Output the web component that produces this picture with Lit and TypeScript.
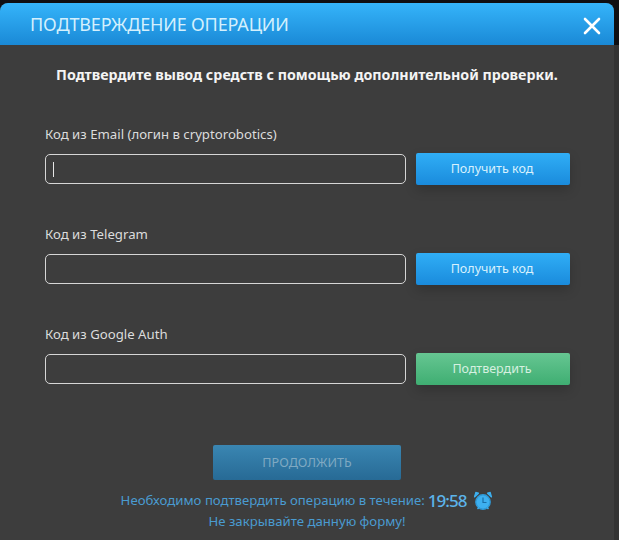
import { LitElement, html, css } from "lit";
import { customElement } from "lit/decorators.js";

@customElement("app-root")
export class AppRoot extends LitElement {
  static styles = css`
    :host { display: block; width: 619px; height: 540px; overflow: hidden; background: linear-gradient(#0f0f12 0, #0f0f12 45px, #333 45px); font-family: "Noto Sans", "Open Sans", sans-serif; }
    .top { height: 3px; }
    .modal { width: 614px; height: 537px; background: #3d3d3d; border-radius: 8px 8px 0 0; box-sizing: border-box; display: flex; flex-direction: column; }
    .head { height: 42px; flex: none; border-radius: 8px 8px 0 0; background: linear-gradient(#35b4fa, #1a89d6); display: flex; align-items: center; justify-content: space-between; padding: 0 13px 0 30px; color: #d4f0fd; font-size: 18px; letter-spacing: -0.15px; }
    .close { width: 18px; height: 18px; display: block; margin-top: 3px; }
    .lead { margin: 20px 0 0; text-align: center; color: #f4f4f4; font-weight: 700; font-size: 14.25px; line-height: 20px; }
    .rows { margin-top: 39px; padding-left: 45px; display: flex; flex-direction: column; gap: 39px; }
    .label { color: #dcdcdc; font-size: 13.2px; line-height: 20px; height: 20px; }
    .row { margin-top: 9px; display: flex; align-items: center; gap: 10px; }
    .input { width: 361px; height: 30px; box-sizing: border-box; border: 1px solid #d6d6d6; border-radius: 5px; display: flex; align-items: center; padding-left: 7px; }
    .caret { width: 1px; height: 15px; background: #e6e6e6; }
    .btn { width: 154px; height: 32px; box-sizing: border-box; padding: 0 2px 1px 0; border-radius: 2px; display: flex; align-items: center; justify-content: center; font-size: 12.5px; box-shadow: 0 5px 12px rgba(0,0,0,0.18); }
    .blue { background: linear-gradient(#30aef6, #1a8bdc); color: #d8f1fd; }
    .green { background: linear-gradient(#66c692, #3fae72); color: #d6f0e0; }
    .foot { margin-top: 60px; display: flex; flex-direction: column; align-items: center; }
    .go { width: 188px; height: 35px; border-radius: 2px; background: linear-gradient(#3a86b2, #276a95); color: #7fa9c2; font-size: 12.6px; display: flex; align-items: center; justify-content: center; }
    .note { color: #4a9bd0; font-size: 13.2px; line-height: 21px; text-align: center; }
    .timer-line { margin-top: 10px; display: flex; align-items: center; justify-content: center; height: 21px; }
    .time { font-size: 17px; font-weight: 500; color: #5cb4ea; margin-left: 3px; letter-spacing: -1px; }
    .clock { width: 20px; height: 20px; margin-left: 7px; display: block; }
  `;

  private field(label: string, btn: string, cls: string, caret = false) {
    return html`<div>
      <div class="label">${label}</div>
      <div class="row">
        <div class="input">${caret ? html`<div class="caret"></div>` : ""}</div>
        <div class="btn ${cls}">${btn}</div>
      </div>
    </div>`;
  }

  render() {
    return html`
      <div class="top"></div>
      <div class="modal">
        <div class="head">
          <span>ПОДТВЕРЖДЕНИЕ ОПЕРАЦИИ</span>
          <svg class="close" viewBox="0 0 18 18"><path d="M2 2 16 16M16 2 2 16" stroke="#fff" stroke-width="2.6" stroke-linecap="round" fill="none"/></svg>
        </div>
        <p class="lead">Подтвердите вывод средств с помощью дополнительной проверки.</p>
        <div class="rows">
          ${this.field("Код из Email (логин в cryptorobotics)", "Получить код", "blue", true)}
          ${this.field("Код из Telegram", "Получить код", "blue")}
          ${this.field("Код из Google Auth", "Подтвердить", "green")}
        </div>
        <div class="foot">
          <div class="go">ПРОДОЛЖИТЬ</div>
          <div class="timer-line note">
            <span>Необходимо подтвердить операцию в течение:</span>
            <span class="time">19:58</span>
            <svg class="clock" viewBox="0 0 20 20">
              <circle cx="10" cy="11" r="7.2" fill="#3db0f0" stroke="#2f9ad8" stroke-width="1.4"/>
              <path d="M10 6.5V11.5H13.5" stroke="#1a6fa8" stroke-width="1.2" fill="none"/>
              <path d="M1.5 6 5.5 2.2 2.8 1.4ZM18.5 6 14.5 2.2 17.2 1.4Z" fill="#3db0f0" stroke="#3db0f0" stroke-width="1.2" stroke-linejoin="round"/>
              <path d="M4.5 18 6 16.5M15.5 18 14 16.5" stroke="#3db0f0" stroke-width="1.4"/>
            </svg>
          </div>
          <div class="note">Не закрывайте данную форму!</div>
        </div>
      </div>
    `;
  }
}
